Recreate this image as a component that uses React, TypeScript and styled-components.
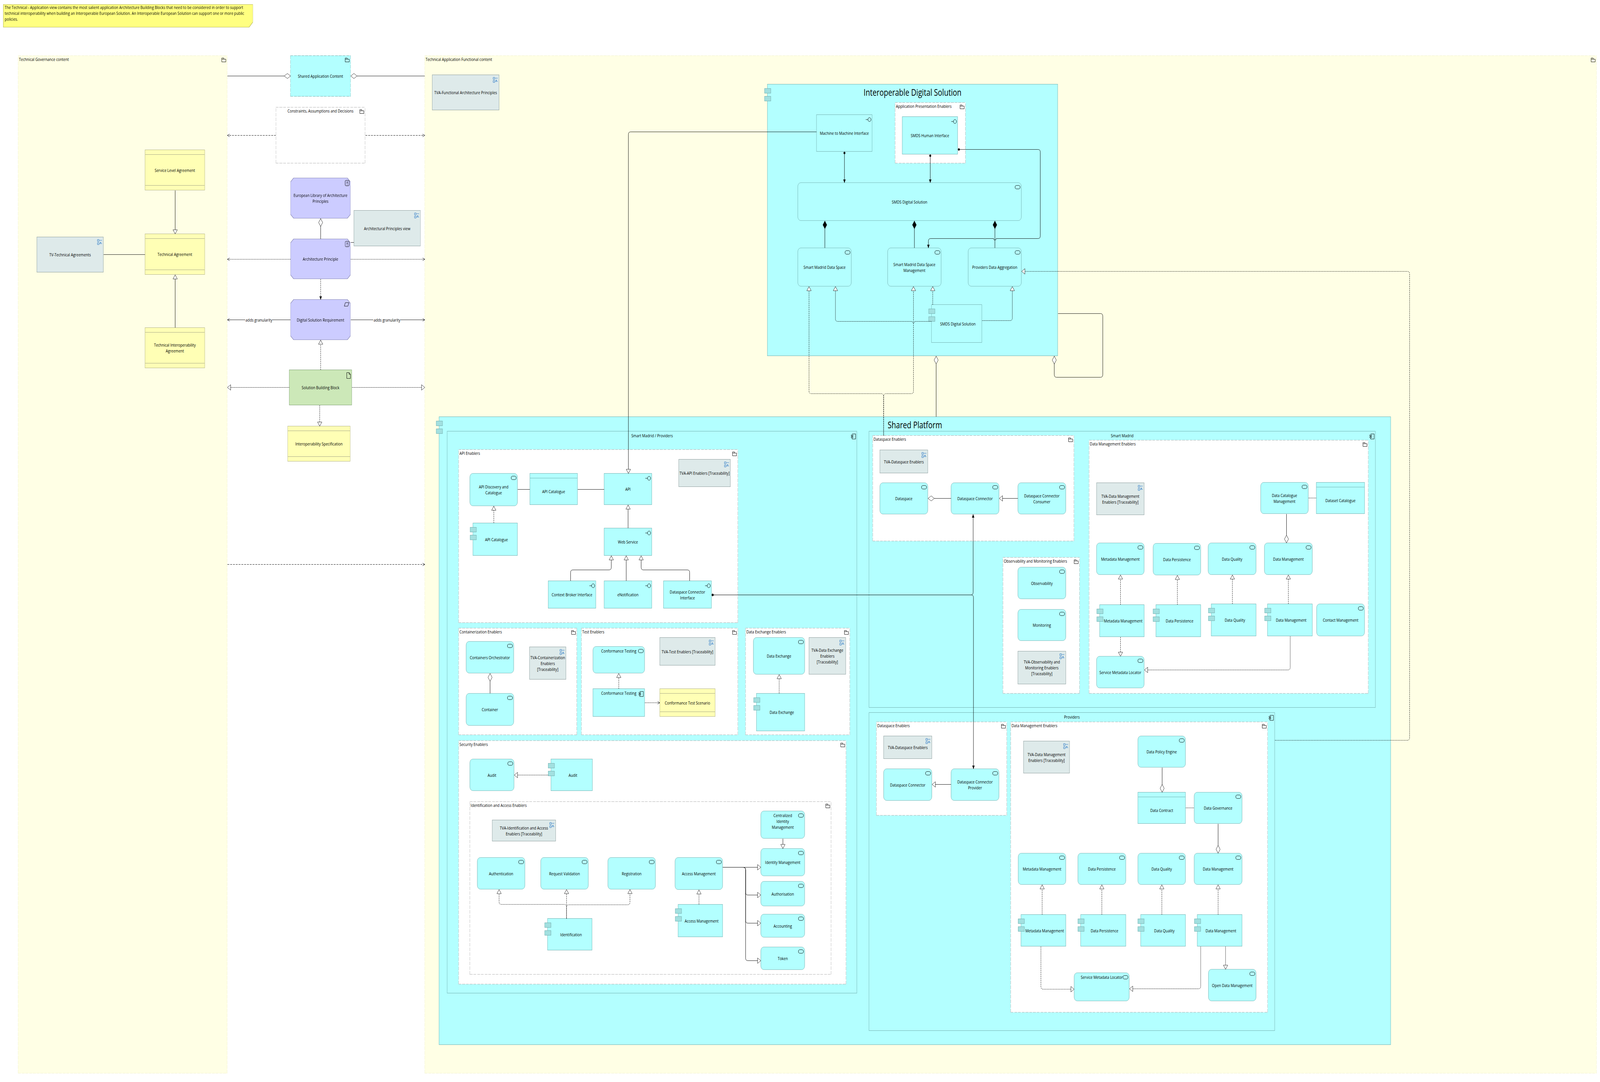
import React from 'react';
import styled, { createGlobalStyle, css } from 'styled-components';

const CYAN = '#b3ffff';
const CYAN_EDGE = '#74b0b0';
const LUG = '#a2e0e0';
const DIAGRAM_WIDTH = 5147;

const GlobalStyle = createGlobalStyle`
  body {
    margin: 0;
    background: #ffffff;
    color: #000000;
    font-family: "Open Sans", "Noto Sans", sans-serif;
    font-size: 11.4px;
    line-height: 15px;
    overflow: hidden;
  }
`;

const Canvas = styled.div`
  height: 2769px;
  overflow: hidden;
  position: relative;
  transform-origin: 0 0;
  width: ${DIAGRAM_WIDTH}px;
`;

interface Geo {
  $x: number;
  $y: number;
  $r: number;
  $b: number;
}

// nodes of the diagram sit at their own place on the canvas
const Placed = styled.div.attrs<Geo>(({ $x, $y, $r, $b }) => ({
  style: { left: $x, top: $y, width: $r - $x, height: $b - $y },
}))<Geo>`
  align-items: center;
  box-sizing: border-box;
  display: flex;
  justify-content: center;
  position: absolute;
  text-align: center;
  white-space: pre-line;
`;

const dashedEdge = (color: string) => css`
  background-image:
    repeating-linear-gradient(90deg, ${color} 0 9px, transparent 9px 12px),
    repeating-linear-gradient(90deg, ${color} 0 9px, transparent 9px 12px),
    repeating-linear-gradient(0deg, ${color} 0 9px, transparent 9px 12px),
    repeating-linear-gradient(0deg, ${color} 0 9px, transparent 9px 12px);
  background-position: 0 0, 0 100%, 0 0, 100% 0;
  background-repeat: no-repeat;
  background-size: 100% 1px, 100% 1px, 1px 100%, 1px 100%;
`;

const GroupNode = styled(Placed)<{ $center?: boolean }>`
  align-items: flex-start;
  background-color: #ffffff;
  justify-content: ${(p) => (p.$center ? 'center' : 'flex-start')};
  padding: 2px 3px;
  ${dashedEdge('#b4b4b4')}
`;

const ContentNode = styled(GroupNode)`
  background-color: #ffffe5;
  ${dashedEdge('#f2f2cf')}
`;

const SharedContentNode = styled(Placed)`
  background-color: ${CYAN};
  ${dashedEdge('#74b0b0')}
`;

const lugs = css`
  &::before,
  &::after {
    background: ${LUG};
    border: 1px solid ${CYAN_EDGE};
    box-sizing: border-box;
    content: '';
    height: 13px;
    left: -10px;
    position: absolute;
    width: 21px;
  }

  &::before {
    top: 10px;
  }

  &::after {
    top: 30px;
  }
`;

const cyanBox = css`
  background: ${CYAN};
  border: 1px solid ${CYAN_EDGE};
`;

const PlatformNode = styled(Placed)`
  ${cyanBox}
  ${lugs}
  align-items: flex-start;
  font-size: 23px;
  line-height: 30px;
  padding-top: 5px;
`;

const PanelNode = styled(Placed)`
  ${cyanBox}
  align-items: flex-start;
  padding-top: 3px;
`;

const ServiceNode = styled(Placed)<{ $top?: boolean }>`
  ${cyanBox}
  align-items: ${(p) => (p.$top ? 'flex-start' : 'center')};
  border-radius: 10px;
  padding-top: ${(p) => (p.$top ? '3px' : '0')};
`;

const InterfaceNode = styled(Placed)`
  ${cyanBox}
`;

const ComponentNode = styled(Placed)`
  ${cyanBox}
  ${lugs}
  padding-left: 8px;
`;

const PlainComponentNode = styled(Placed)`
  ${cyanBox}
  align-items: flex-start;
  padding-top: 3px;
`;

const ViewNode = styled(Placed)`
  background: #deeaea;
  border: 1px solid #8f9f9f;
`;

const ContractNode = styled(Placed)`
  align-items: stretch;
  background: #ffffb5;
  border: 1px solid #b3b38a;
  flex-direction: column;
`;

const CyanContractNode = styled(ContractNode)`
  ${cyanBox}
`;

const ContractBody = styled.div`
  align-items: center;
  display: flex;
  flex: 1;
  justify-content: center;
`;

const ContractBand = styled.div<{ $edge: 'top' | 'bottom' }>`
  border-${(p) => (p.$edge === 'top' ? 'bottom' : 'top')}: 1px solid #a8a88a;
  height: 11px;
`;

const CyanBand = styled(ContractBand)`
  border-color: ${CYAN_EDGE};
`;

const bevelShape =
  'polygon(10px 0, calc(100% - 10px) 0, 100% 10px, 100% calc(100% - 10px), calc(100% - 10px) 100%, 10px 100%, 0 calc(100% - 10px), 0 10px)';

const PrincipleNode = styled(Placed)`
  background: #8c8cb8;
  clip-path: ${bevelShape};

  &::before {
    background: #ccccff;
    clip-path: ${bevelShape};
    content: '';
    inset: 1px;
    position: absolute;
  }
`;

const PrincipleText = styled.span`
  position: relative;
`;

const ArtifactNode = styled(Placed)`
  background: #cce8b8;
  border: 1px solid #7d9f72;
`;

const noteShape = 'polygon(0 0, 100% 0, 100% calc(100% - 13px), calc(100% - 12px) 100%, 0 100%)';

const NoteNode = styled(Placed)`
  background: #b9b95c;
  clip-path: ${noteShape};

  &::before {
    background: #ffff80;
    clip-path: ${noteShape};
    content: '';
    inset: 1px;
    position: absolute;
  }
`;

const NoteText = styled.div`
  height: 100%;
  padding: 4px 5px;
  position: relative;
  text-align: left;
  width: 100%;
`;

const EdgeLabel = styled.span.attrs<{ $x: number; $y: number }>(({ $x, $y }) => ({
  style: { left: $x, top: $y },
}))<{ $x: number; $y: number }>`
  background: #ffffff;
  padding: 0 1px;
  position: absolute;
  transform: translate(-50%, -50%);
  white-space: nowrap;
`;

const IconSlot = styled.svg<{ $top: number; $right: number }>`
  fill: none;
  overflow: visible;
  position: absolute;
  right: ${(p) => p.$right}px;
  stroke: #000000;
  stroke-width: 1;
  top: ${(p) => p.$top}px;
`;

const BlueIconSlot = styled(IconSlot)`
  stroke: #1f72c4;
`;

const ServiceIcon = () => (
  <IconSlot $top={6} $right={3} width="17" height="10">
    <rect x="0.5" y="0.5" width="16" height="9" rx="4.5" />
  </IconSlot>
);

const InterfaceIcon = () => (
  <IconSlot $top={6} $right={2} width="18" height="12">
    <circle cx="12" cy="6" r="5" />
    <path d="M0 6 H7" />
  </IconSlot>
);

const FolderIcon = () => (
  <IconSlot $top={6} $right={4} width="14" height="11">
    <path d="M0.5 3.5 H13.5 V10.5 H0.5 Z M0.5 3.5 V0.5 H7 V3.5" />
  </IconSlot>
);

const ViewIcon = () => (
  <BlueIconSlot $top={5} $right={3} width="16" height="16">
    <path d="M0.5 1 H5.5 V6 H0.5 Z M0.5 9 H5.5 V14 H0.5 Z M7 3 H15 M7 11.5 H15" />
    <path d="M9 8 H12 V9.5 H9 Z" />
  </BlueIconSlot>
);

const PrincipleIcon = () => (
  <IconSlot $top={6} $right={4} width="14" height="15">
    <rect x="0.5" y="0.5" width="12.5" height="14" rx="2.5" />
    <path d="M6.75 3 V9 M6.75 11 V12.5" strokeWidth="1.6" />
  </IconSlot>
);

const RequirementIcon = () => (
  <IconSlot $top={8} $right={5} width="16" height="10">
    <path d="M4 0.5 H15.5 L12 9.5 H0.5 Z" />
  </IconSlot>
);

const ArtifactIcon = () => (
  <IconSlot $top={6} $right={3} width="13" height="16">
    <path d="M0.5 0.5 H8 L12.5 5 V15.5 H0.5 Z M8 0.5 V5 H12.5" />
  </IconSlot>
);

const ComponentIcon = () => (
  <IconSlot $top={6} $right={3} width="15" height="14">
    <path d="M3 0.5 H14.5 V13.5 H3 V10 M3 7 V5" />
    <path d="M0.5 3 H6 V5.5 H0.5 Z M0.5 7.5 H6 V10 H0.5 Z" />
  </IconSlot>
);

type Kind =
  | 'note' | 'content' | 'group' | 'shared' | 'platform' | 'panel' | 'service' | 'interface'
  | 'component' | 'plainComponent' | 'view' | 'contract' | 'data' | 'principle' | 'requirement' | 'artifact';

interface DiagramNode {
  kind: Kind;
  text: string;
  x: number;
  y: number;
  r: number;
  b: number;
  center?: boolean;
  top?: boolean;
  icon?: boolean;
}

const n = (kind: Kind, text: string, x: number, y: number, r: number, b: number, extra: Partial<DiagramNode> = {}): DiagramNode => ({
  kind, text, x, y, r, b, ...extra,
});

const nodes: DiagramNode[] = [
  n('note', 'The Technical - Application view contains the most salient application Architecture Building Blocks that need to be considered in order to support\ntechnical interoperability when building an Interoperable European Solution. An Interoperable European Solution can support one or more public\npolicies.', 10, 11, 814, 70),

  // left column
  n('content', 'Technical Governance content', 58, 142, 731, 2747),
  n('contract', 'Service Level Agreement', 466, 383, 659, 487),
  n('contract', 'Technical Agreement', 466, 598, 659, 703),
  n('contract', 'Technical Interoperability\nAgreement', 466, 838, 659, 942),
  n('view', 'TV-Technical Agreements', 118, 606, 333, 697),

  // middle column
  n('shared', 'Shared Application Content', 934, 142, 1128, 247),
  n('group', 'Constraints, Assumptions and Decisions', 887, 274, 1175, 418, { center: true }),
  n('principle', 'European Library of Architecture\nPrinciples', 934, 455, 1128, 559),
  n('view', 'Architectural Principles view', 1138, 538, 1353, 630),
  n('principle', 'Architecture Principle', 934, 611, 1128, 714),
  n('requirement', 'Digital Solution Requirement', 934, 766, 1128, 870),
  n('artifact', 'Solution Building Block', 930, 946, 1132, 1037),
  n('contract', 'Interoperability Specification', 925, 1090, 1127, 1181),

  // functional content
  n('content', 'Technical Application Functional content', 1366, 142, 5136, 2747),
  n('view', 'TVA-Functional Architecture Principles', 1390, 191, 1606, 282),

  // interoperable digital solution
  n('platform', 'Interoperable Digital Solution', 2468, 215, 3403, 911),
  n('interface', 'Machine to Machine Interface', 2626, 293, 2806, 388),
  n('group', 'Application Presentation Enablers', 2879, 262, 3106, 418),
  n('interface', 'SMDS Human Interface', 2902, 298, 3081, 395),
  n('service', 'SMDS Digital Solution', 2566, 467, 3286, 565),
  n('service', 'Smart Madrid Data Space', 2566, 634, 2739, 733),
  n('service', 'Smart Madrid Data Space\nManagement', 2855, 634, 3028, 733),
  n('service', 'Providers Data Aggregation', 3114, 634, 3286, 733),
  n('component', 'SMDS Digital Solution', 2996, 779, 3159, 877),

  // shared platform
  n('platform', 'Shared Platform', 1412, 1066, 4474, 2674),
  n('panel', 'Smart Madrid / Providers', 1438, 1103, 2757, 2542, { icon: true }),
  n('group', 'API Enablers', 1475, 1150, 2374, 1594),
  n('service', 'API Discovery and\nCatalogue', 1511, 1211, 1665, 1295),
  n('data', 'API Catalogue', 1704, 1211, 1858, 1292),
  n('interface', 'API', 1943, 1211, 2097, 1292),
  n('view', 'TVA-API Enablers [Traceability]', 2183, 1175, 2350, 1246),
  n('component', 'API Catalogue', 1521, 1338, 1665, 1422),
  n('interface', 'Web Service', 1943, 1351, 2097, 1422),
  n('interface', 'Context Broker Interface', 1763, 1486, 1917, 1557),
  n('interface', 'eNotification', 1943, 1486, 2097, 1557),
  n('interface', 'Dataspace Connector\nInterface', 2134, 1486, 2289, 1557),

  n('group', 'Containerization Enablers', 1475, 1607, 1856, 1881),
  n('service', 'Containers Orchestrator', 1499, 1641, 1653, 1723),
  n('service', 'Container', 1499, 1774, 1653, 1857),
  n('view', 'TVA-Containerization\nEnablers\n[Traceability]', 1703, 1655, 1821, 1739),

  n('group', 'Test Enablers', 1870, 1607, 2374, 1881),
  n('service', 'Conformance Testing', 1907, 1654, 2074, 1723, { top: true }),
  n('view', 'TVA-Test Enablers [Traceability]', 2122, 1631, 2301, 1703),
  n('plainComponent', 'Conformance Testing', 1907, 1762, 2074, 1834),
  n('contract', 'Conformance Test Scenario', 2122, 1762, 2301, 1834),

  n('group', 'Data Exchange Enablers', 2398, 1607, 2734, 1881),
  n('service', 'Data Exchange', 2423, 1631, 2589, 1726),
  n('view', 'TVA-Data Exchange\nEnablers\n[Traceability]', 2602, 1631, 2721, 1726),
  n('component', 'Data Exchange', 2433, 1774, 2589, 1871),

  n('group', 'Security Enablers', 1475, 1895, 2722, 2519),
  n('service', 'Audit', 1511, 1942, 1654, 2024),
  n('component', 'Audit', 1772, 1942, 1906, 2024),
  n('group', 'Identification and Access Enablers', 1511, 2051, 2674, 2494),
  n('view', 'TVA-Identification and Access\nEnablers [Traceability]', 1583, 2098, 1788, 2153),
  n('service', 'Authentication', 1535, 2194, 1689, 2276),
  n('service', 'Request Validation', 1739, 2194, 1893, 2276),
  n('service', 'Registration', 1955, 2194, 2109, 2276),
  n('service', 'Access Management', 2171, 2194, 2325, 2277),
  n('component', 'Access Management', 2181, 2314, 2325, 2398),
  n('component', 'Identification', 1761, 2350, 1905, 2432),
  n('service', 'Centralized\nIdentity\nManagement', 2447, 2075, 2589, 2146, { top: true }),
  n('service', 'Identity Management', 2447, 2171, 2589, 2242),
  n('service', 'Authorisation', 2447, 2255, 2589, 2319),
  n('service', 'Accounting', 2447, 2339, 2589, 2399),
  n('service', 'Token', 2447, 2423, 2589, 2482),

  // smart madrid
  n('panel', 'Smart Madrid', 2795, 1103, 4425, 1811, { icon: true }),
  n('group', 'Dataspace Enablers', 2807, 1114, 3455, 1385),
  n('view', 'TVA-Dataspace Enablers', 2830, 1151, 2985, 1211),
  n('service', 'Dataspace', 2830, 1235, 2985, 1316),
  n('service', 'Dataspace Connector', 3059, 1235, 3214, 1316),
  n('service', 'Dataspace Connector\nConsumer', 3274, 1235, 3429, 1316),
  n('group', 'Observability and Monitoring Enablers', 3226, 1426, 3473, 1775),
  n('service', 'Observability', 3274, 1451, 3429, 1533),
  n('service', 'Monitoring', 3274, 1559, 3429, 1640),
  n('view', 'TVA-Observability and\nMonitoring Enablers\n[Traceability]', 3274, 1666, 3429, 1751),
  n('group', 'Data Management Enablers', 3503, 1126, 4402, 1775),
  n('view', 'TVA-Data Management\nEnablers [Traceability]', 3527, 1235, 3681, 1318),
  n('service', 'Data Catalogue\nManagement', 4055, 1234, 4209, 1315),
  n('data', 'Dataset Catalogue', 4234, 1234, 4390, 1315),
  n('service', 'Metadata Management', 3527, 1389, 3681, 1471),
  n('service', 'Data Persistence', 3709, 1390, 3863, 1472),
  n('service', 'Data Quality', 3886, 1389, 4041, 1471),
  n('service', 'Data Management', 4067, 1389, 4222, 1471),
  n('component', 'Metadata Management', 3537, 1547, 3681, 1630),
  n('component', 'Data Persistence', 3718, 1547, 3863, 1630),
  n('component', 'Data Quality', 3896, 1545, 4041, 1628),
  n('component', 'Data Management', 4077, 1545, 4222, 1628),
  n('service', 'Contact Management', 4235, 1545, 4390, 1628),
  n('service', 'Service Metadata Locator', 3527, 1679, 3681, 1761),

  // providers
  n('panel', 'Providers', 2795, 1823, 4101, 2638, { icon: true }),
  n('group', 'Dataspace Enablers', 2819, 1847, 3239, 2087),
  n('view', 'TVA-Dataspace Enablers', 2842, 1883, 2998, 1942),
  n('service', 'Dataspace Connector', 2842, 1967, 2998, 2049),
  n('service', 'Dataspace Connector\nProvider', 3059, 1967, 3214, 2049),
  n('group', 'Data Management Enablers', 3251, 1847, 4078, 2591),
  n('view', 'TVA-Data Management\nEnablers [Traceability]', 3292, 1896, 3441, 1979),
  n('service', 'Data Policy Engine', 3660, 1883, 3814, 1964),
  n('data', 'Data Contract', 3660, 2027, 3814, 2108),
  n('service', 'Data Governance', 3841, 2027, 3996, 2108),
  n('service', 'Metadata Management', 3275, 2183, 3429, 2264),
  n('service', 'Data Persistence', 3467, 2183, 3622, 2264),
  n('service', 'Data Quality', 3660, 2183, 3814, 2264),
  n('service', 'Data Management', 3841, 2183, 3996, 2264),
  n('component', 'Metadata Management', 3284, 2340, 3429, 2422),
  n('component', 'Data Persistence', 3476, 2340, 3622, 2422),
  n('component', 'Data Quality', 3669, 2340, 3814, 2422),
  n('component', 'Data Management', 3851, 2340, 3996, 2422),
  n('service', 'Service Metadata Locator', 3455, 2489, 3633, 2562, { top: true }),
  n('service', 'Open Data Management', 3887, 2480, 4041, 2562),
];

type LineStyle = 'solid' | 'dash' | 'fine' | 'dot';
type Head = 'triangle' | 'diamond' | 'solidDiamond' | 'open' | 'arrow';
type Point = [number, number, 'jump'?];

interface Wire {
  pts: Point[];
  line?: LineStyle;
  end?: Head;
  dot?: boolean;
}

const w = (line: LineStyle, end: Head | undefined, pts: Point[], dot = false): Wire => ({ line, end, pts, dot });

const wires: Wire[] = [
  w('solid', 'diamond', [[731, 194], [934, 194]]),
  w('solid', 'diamond', [[1366, 194], [1128, 194]]),
  w('dash', 'open', [[887, 346], [731, 346]]),
  w('dash', 'open', [[1175, 346], [1366, 346]]),
  w('solid', 'triangle', [[563, 487], [563, 598]]),
  w('solid', 'triangle', [[563, 838], [563, 703]]),
  w('solid', undefined, [[333, 651], [466, 651]]),
  w('solid', 'diamond', [[1031, 611], [1031, 559]]),
  w('solid', undefined, [[1128, 620], [1138, 620]]),
  w('fine', 'open', [[934, 663], [731, 663]]),
  w('fine', 'open', [[1128, 663], [1366, 663]]),
  w('fine', 'arrow', [[1031, 714], [1031, 766]]),
  w('solid', 'open', [[934, 818], [731, 818]]),
  w('solid', 'open', [[1128, 818], [1366, 818]]),
  w('fine', 'triangle', [[1031, 946], [1031, 870]]),
  w('dot', 'triangle', [[930, 991], [731, 991]]),
  w('dot', 'triangle', [[1132, 991], [1366, 991]]),
  w('fine', 'triangle', [[1028, 1037], [1028, 1090]]),
  w('dash', 'open', [[731, 1444], [1366, 1444]]),

  // interoperable digital solution
  w('solid', 'triangle', [[2626, 337], [2021, 337], [2021, 1211]]),
  w('solid', 'arrow', [[2716, 388], [2716, 467]], true),
  w('solid', 'arrow', [[2992, 395], [2992, 467]], true),
  w('solid', 'solidDiamond', [[2653, 634], [2653, 565]]),
  w('solid', 'solidDiamond', [[2941, 634], [2941, 565]]),
  w('solid', 'solidDiamond', [[3200, 634], [3200, 565]]),
  w('solid', 'arrow', [[3081, 382], [3346, 382], [3346, 610], [3200, 610, 'jump'], [2986, 610], [2986, 634]], true),
  w('dot', 'triangle', [[2996, 822], [2938, 822, 'jump'], [2687, 822], [2687, 733]]),
  w('fine', 'triangle', [[3000, 779], [3000, 733]]),
  w('dot', 'triangle', [[3159, 820], [3256, 820], [3256, 733]]),
  w('fine', 'triangle', [[2842, 1114], [2842, 1007], [2602, 1007], [2602, 733]]),
  w('fine', 'triangle', [[2842, 1114], [2842, 1007], [2938, 1007], [2938, 733]]),
  w('solid', 'diamond', [[3011, 1066], [3011, 911]]),
  w('solid', 'diamond', [[3403, 802], [3547, 802], [3547, 965], [3391, 965], [3391, 911]]),
  w('fine', 'triangle', [[4101, 1894], [4534, 1894], [4534, 694], [3286, 694]]),

  // api enablers
  w('solid', undefined, [[1665, 1252], [1704, 1252]]),
  w('solid', undefined, [[1858, 1252], [1943, 1252]]),
  w('fine', 'triangle', [[1588, 1338], [1588, 1295]]),
  w('solid', 'triangle', [[2020, 1351], [2020, 1292]]),
  w('solid', 'triangle', [[1835, 1486], [1835, 1458], [1966, 1458], [1966, 1422]]),
  w('solid', 'triangle', [[2014, 1486], [2014, 1422]]),
  w('solid', 'triangle', [[2218, 1486], [2218, 1458], [2062, 1458], [2062, 1422]]),
  w('solid', 'arrow', [[2289, 1522], [3130, 1522], [3130, 1316]], true),
  w('solid', 'arrow', [[2289, 1522], [3131, 1522], [3131, 1967]], true),

  // containers, test, exchange
  w('solid', 'diamond', [[1576, 1774], [1576, 1723]]),
  w('fine', 'triangle', [[1990, 1762], [1990, 1723]]),
  w('dot', 'open', [[2074, 1798], [2122, 1798]]),
  w('fine', 'triangle', [[2506, 1774], [2506, 1726]]),

  // security
  w('dot', 'triangle', [[1763, 1983], [1654, 1983]]),
  w('fine', 'triangle', [[1822, 2350], [1822, 2276]]),
  w('fine', 'triangle', [[1822, 2350], [1822, 2314], [1605, 2314], [1605, 2276]]),
  w('fine', 'triangle', [[1822, 2350], [1822, 2315], [2026, 2315], [2026, 2276]]),
  w('fine', 'triangle', [[2248, 2314], [2248, 2277]]),
  w('solid', 'triangle', [[2518, 2146], [2518, 2171]]),
  w('solid', 'triangle', [[2325, 2219], [2447, 2219]]),
  w('solid', 'triangle', [[2325, 2219], [2398, 2219], [2398, 2290], [2447, 2290]]),
  w('solid', 'triangle', [[2325, 2219], [2398, 2219], [2398, 2362], [2447, 2362]]),
  w('solid', 'triangle', [[2325, 2219], [2398, 2219], [2398, 2458], [2447, 2458]]),

  // smart madrid
  w('solid', 'diamond', [[3059, 1275], [2985, 1275]]),
  w('solid', 'triangle', [[3274, 1275], [3214, 1275]]),
  w('dot', undefined, [[4209, 1274], [4234, 1274]]),
  w('solid', 'diamond', [[4138, 1315], [4138, 1389]]),
  w('fine', 'triangle', [[3604, 1547], [3604, 1471]]),
  w('fine', 'triangle', [[3787, 1547], [3787, 1472]]),
  w('fine', 'triangle', [[3964, 1545], [3964, 1471]]),
  w('fine', 'triangle', [[4144, 1545], [4144, 1471]]),
  w('fine', 'triangle', [[3604, 1630], [3604, 1679]]),
  w('dot', 'triangle', [[4150, 1628], [4150, 1714], [3681, 1714]]),

  // providers
  w('solid', 'triangle', [[3059, 2007], [2998, 2007]]),
  w('solid', 'diamond', [[3738, 1964], [3738, 2027]]),
  w('dot', undefined, [[3814, 2067], [3841, 2067]]),
  w('solid', 'diamond', [[3918, 2108], [3918, 2183]]),
  w('fine', 'triangle', [[3352, 2340], [3352, 2264]]),
  w('fine', 'triangle', [[3544, 2340], [3544, 2264]]),
  w('fine', 'triangle', [[3737, 2340], [3737, 2264]]),
  w('fine', 'triangle', [[3918, 2340], [3918, 2264]]),
  w('fine', 'triangle', [[3348, 2422], [3348, 2531], [3455, 2531]]),
  w('dot', 'triangle', [[3862, 2422], [3862, 2530], [3633, 2530]]),
  w('dot', 'triangle', [[3942, 2422], [3942, 2480]]),
];

const WireLayer = styled.svg`
  height: 2769px;
  left: 0;
  pointer-events: none;
  position: absolute;
  top: 0;
  width: ${DIAGRAM_WIDTH}px;
`;

const dashes: Record<LineStyle, string> = {
  solid: 'none',
  dash: '6 3',
  fine: '3 2',
  dot: '2 1',
};

const WirePath = styled.path<{ $line: LineStyle }>`
  fill: none;
  stroke: #000000;
  stroke-dasharray: ${(p) => dashes[p.$line]};
  stroke-width: 1;
  vector-effect: non-scaling-stroke;
`;

const HollowHead = styled.polygon`
  fill: #ffffff;
  stroke: #222222;
  stroke-width: 1;
  vector-effect: non-scaling-stroke;
`;

const SolidHead = styled.polygon`
  fill: #000000;
  stroke: #000000;
  stroke-width: 0.5;
`;

const OpenHead = styled.polyline`
  fill: none;
  stroke: #000000;
  stroke-width: 1;
  vector-effect: non-scaling-stroke;
`;

const px = (v: number) => Math.floor(v) + 0.5;

function routePath(pts: Point[]) {
  const radius = 7;
  const jump = 4;
  let d = `M${px(pts[0][0])} ${px(pts[0][1])}`;
  pts.slice(1, -1).forEach((p, i) => {
    const prev = pts[i];
    const next = pts[i + 2];
    const x = px(p[0]);
    const y = px(p[1]);
    const inX = Math.sign(p[0] - prev[0]);
    const inY = Math.sign(p[1] - prev[1]);
    const outX = Math.sign(next[0] - p[0]);
    const outY = Math.sign(next[1] - p[1]);
    if (p[2] === 'jump') {
      d += ` L${x - inX * jump} ${y - inY * jump} A${jump} ${jump} 0 0 1 ${x + inX * jump} ${y + inY * jump}`;
    } else {
      d += ` L${x - inX * radius} ${y - inY * radius} Q${x} ${y} ${x + outX * radius} ${y + outY * radius}`;
    }
  });
  const last = pts[pts.length - 1];
  return `${d} L${px(last[0])} ${px(last[1])}`;
}

function HeadMark({ head, at, from }: { head: Head; at: Point; from: Point }) {
  const angle = (Math.atan2(at[1] - from[1], at[0] - from[0]) * 180) / Math.PI;
  const transform = `translate(${px(at[0])} ${px(at[1])}) rotate(${angle})`;
  if (head === 'triangle') return <HollowHead transform={transform} points="0,0 -10.5,-7 -10.5,7" />;
  if (head === 'diamond') return <HollowHead transform={transform} points="0,0 -10,-6.5 -20,0 -10,6.5" />;
  if (head === 'solidDiamond') return <SolidHead transform={transform} points="0,0 -10,-6.5 -20,0 -10,6.5" />;
  if (head === 'arrow') return <SolidHead transform={transform} points="0,0 -8,-3.5 -8,3.5" />;
  return <OpenHead transform={transform} points="-7,-3.5 0,0 -7,3.5" />;
}

function StartDot({ at, to }: { at: Point; to: Point }) {
  const dx = Math.sign(to[0] - at[0]) * 3;
  const dy = Math.sign(to[1] - at[1]) * 3;
  return <circle cx={px(at[0]) + dx} cy={px(at[1]) + dy} r="3" fill="#000000" />;
}

const nodeComponents = {
  content: ContentNode,
  group: GroupNode,
  shared: SharedContentNode,
  platform: PlatformNode,
  panel: PanelNode,
  service: ServiceNode,
  interface: InterfaceNode,
  component: ComponentNode,
  plainComponent: PlainComponentNode,
  view: ViewNode,
  artifact: ArtifactNode,
};

function DiagramBox({ node }: { node: DiagramNode }) {
  const geo = { $x: node.x, $y: node.y, $r: node.r, $b: node.b };
  const { kind, text } = node;

  if (kind === 'note') {
    return (
      <NoteNode {...geo}>
        <NoteText>{text}</NoteText>
      </NoteNode>
    );
  }
  if (kind === 'contract' || kind === 'data') {
    const Shell = kind === 'data' ? CyanContractNode : ContractNode;
    const Band = kind === 'data' ? CyanBand : ContractBand;
    return (
      <Shell {...geo}>
        <Band $edge="top" />
        <ContractBody>{text}</ContractBody>
        {kind === 'contract' && <Band $edge="bottom" />}
      </Shell>
    );
  }
  if (kind === 'principle' || kind === 'requirement') {
    return (
      <PrincipleNode {...geo}>
        <PrincipleText>{text}</PrincipleText>
        {kind === 'principle' ? <PrincipleIcon /> : <RequirementIcon />}
      </PrincipleNode>
    );
  }

  const Box = nodeComponents[kind];
  return (
    <Box {...geo} $center={node.center} $top={node.top}>
      {text}
      {(kind === 'content' || kind === 'group' || kind === 'shared') && <FolderIcon />}
      {kind === 'service' && <ServiceIcon />}
      {kind === 'interface' && <InterfaceIcon />}
      {kind === 'view' && <ViewIcon />}
      {kind === 'artifact' && <ArtifactIcon />}
      {(node.icon || kind === 'plainComponent') && <ComponentIcon />}
    </Box>
  );
}

export default function App() {
  // the diagram is drawn at full size and narrowed to whatever window it gets
  const fit = Math.min(1, window.innerWidth / DIAGRAM_WIDTH);
  return (
    <Canvas style={{ transform: `scaleX(${fit})` }}>
      <GlobalStyle />
      {nodes.map((node) => (
        <DiagramBox key={`${node.kind}-${node.text}-${node.x}-${node.y}`} node={node} />
      ))}
      <WireLayer>
        {wires.map((wire, i) => {
          const { pts, end, dot, line = 'solid' } = wire;
          return (
            <g key={i}>
              <WirePath d={routePath(pts)} $line={line} />
              {dot && <StartDot at={pts[0]} to={pts[1]} />}
              {end && <HeadMark head={end} at={pts[pts.length - 1]} from={pts[pts.length - 2]} />}
            </g>
          );
        })}
      </WireLayer>
      <EdgeLabel $x={833} $y={818}>adds granularity</EdgeLabel>
      <EdgeLabel $x={1245} $y={818}>adds granularity</EdgeLabel>
    </Canvas>
  );
}
